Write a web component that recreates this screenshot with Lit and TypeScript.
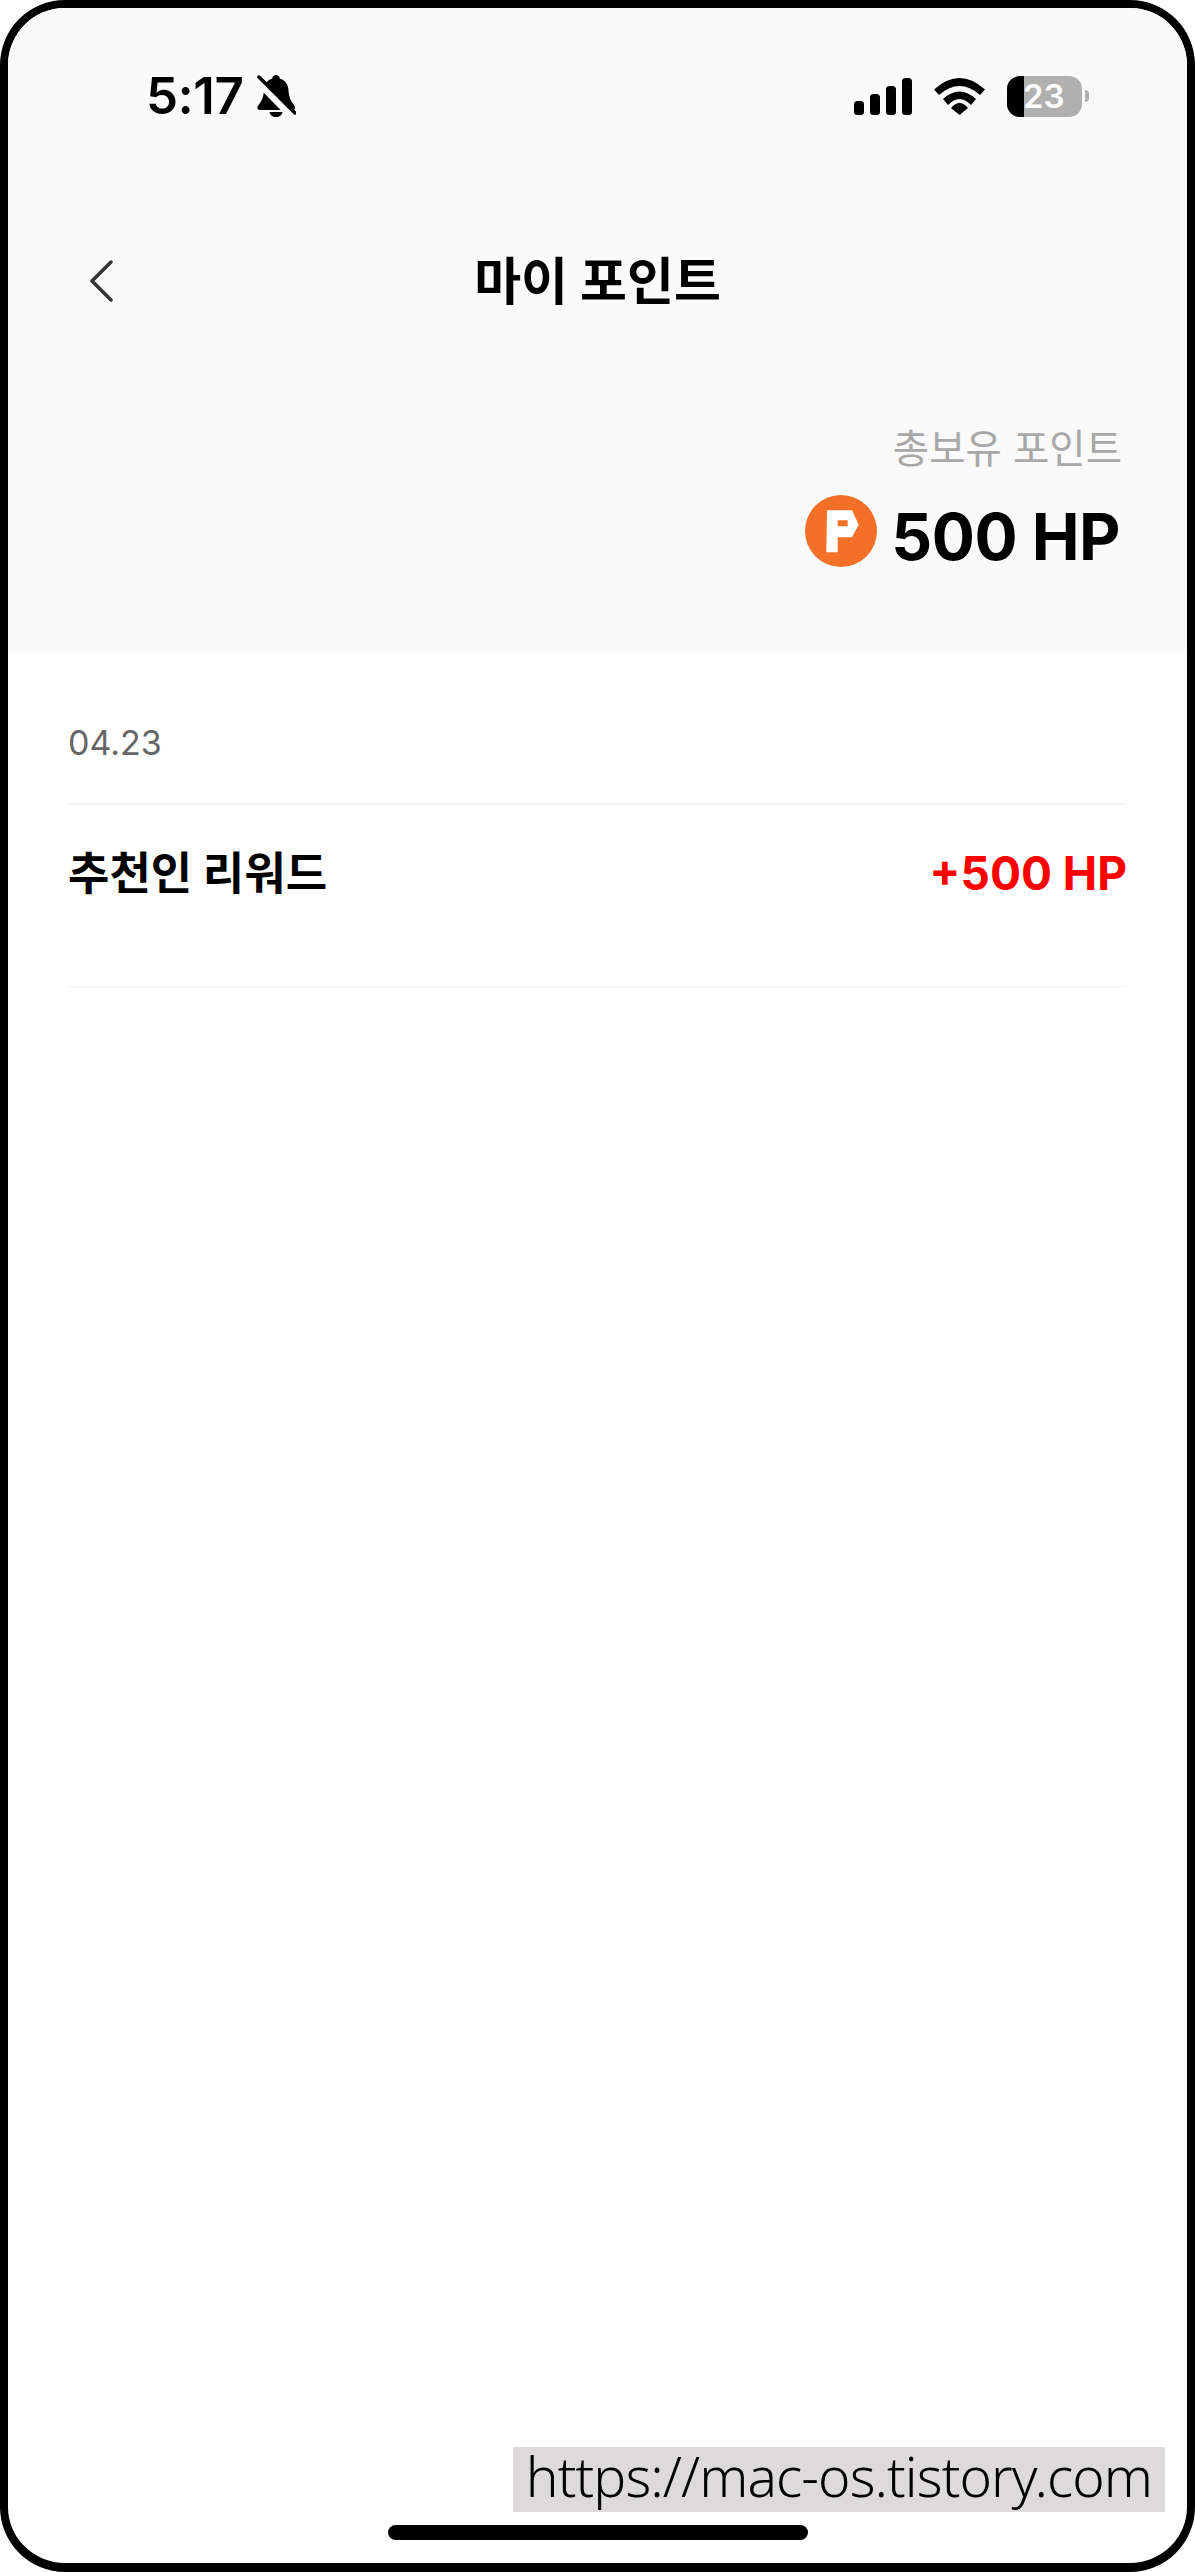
import { LitElement, html, css } from "lit";
import { customElement } from "lit/decorators.js";

@customElement("app-root")
export class AppRoot extends LitElement {
  static styles = css`
    :host { display: block; width: 1195px; height: 2572px; background: #fff; font-family: Inter, "Noto Sans CJK KR", sans-serif; color: #000; }
    .frame { position: relative; box-sizing: border-box; width: 1195px; height: 2572px; border: 8px solid #000; border-bottom-width: 9px; border-radius: 65px; overflow: hidden; display: flex; flex-direction: column; background: #fff; }
    .top { height: 645px; background: #fafafa; flex: none; }
    .status { height: 176px; display: flex; align-items: center; padding: 0 98px 0 138px; }
    .time { font-size: 51px; font-weight: 600; line-height: 60px; letter-spacing: -0.5px; }
    .bell { width: 39px; height: 42px; margin-left: 14px; }
    .right { margin-left: auto; display: flex; align-items: center; }
    .signal { width: 58px; height: 37px; }
    .wifi { width: 51px; height: 37px; margin-left: 22px; }
    .battery { position: relative; width: 75px; height: 41px; margin-left: 22px; border-radius: 13px; overflow: hidden; background: #b0b0b0; display: flex; align-items: center; justify-content: flex-end; }
    .level { position: absolute; left: 0; top: 0; bottom: 0; width: 17px; background: #000; }
    .pct { position: relative; width: 59px; box-sizing: border-box; font-size: 33px; font-weight: 600; line-height: 41px; color: #fff; }
    .tip { width: 4px; height: 12px; margin-left: 3px; background: #b0b0b0; border-radius: 0 6px 6px 0; }
    .nav { position: relative; height: 194px; display: flex; align-items: center; justify-content: center; }
    .back { position: absolute; left: 81px; top: 76px; width: 24px; height: 42px; }
    .title { font-size: 51px; font-weight: 700; line-height: 60px; padding-top: 2px; }
    .summary { display: flex; flex-direction: column; align-items: flex-end; padding: 51px 65px 0 0; }
    .label { font-size: 39.5px; line-height: 40px; color: #a8a8a8; font-weight: 400; }
    .balance { display: flex; align-items: center; margin: 26px 2px 0 0; height: 72px; }
    .coin { width: 72px; height: 72px; }
    .amount { margin-left: 14px; padding-top: 11px; font-size: 64px; font-weight: 700; line-height: 72px; letter-spacing: -0.5px; }
    .list { padding: 70px 60px 0; }
    .date { height: 40px; font-size: 34px; line-height: 40px; color: #666; padding-bottom: 40px; border-bottom: 2px solid #f3f3f3; }
    .row { box-sizing: border-box; height: 183px; padding-top: 43px; display: flex; justify-content: space-between; border-bottom: 2px solid #f8f8f8; line-height: 50px; }
    .name { font-size: 45px; font-weight: 700; padding-top: 1px; }
    .delta { font-size: 46px; font-weight: 700; color: #f00; }
    .spacer { flex: 1; }
    .home { flex: none; width: 420px; height: 15px; margin: 0 0 23px 380px; border-radius: 8px; background: #000; }
    .mark { position: absolute; right: 22px; bottom: 51px; box-sizing: border-box; width: 652px; height: 65px; padding-bottom: 8px; background: #dcdadb; display: flex; align-items: center; justify-content: center; font-family: "Noto Sans", sans-serif; font-size: 55px; font-weight: 350; letter-spacing: -0.9px; line-height: 57px; white-space: nowrap; }
  `;

  render() {
    return html`
      <div class="frame">
        <div class="top">
          <div class="status">
            <span class="time">5:17</span>
            <svg class="bell" viewBox="0 0 39 42">
              <path d="M19 0c2 0 3.500 1.500 3.800 3.500C28 5 31 9.500 31.500 15c.4 6 1.500 10 5.500 15 2 2.500 1.500 5-1.500 5H3c-3 0-3.500-2.500-1.500-5 4-5 5-9 5.500-15C7.500 9.500 10 5 15.200 3.500 15.500 1.500 17 0 19 0z" fill="#000"/>
              <path d="M12.500 37h13c-.5 3-3 5-6.500 5s-6-2-6.500-5z" fill="#000"/>
              <path d="M-2 3L36 42" stroke="#fafafa" stroke-width="8" fill="none"/>
              <path d="M2 2L38 38" stroke="#000" stroke-width="3.500" stroke-linecap="round" fill="none"/>
            </svg>
            <div class="right">
              <svg class="signal" viewBox="0 0 58 37">
                <rect x="0" y="23" width="10" height="14" rx="3.500"/>
                <rect x="16" y="16" width="10" height="21" rx="3.500"/>
                <rect x="32" y="8" width="10" height="29" rx="3.500"/>
                <rect x="48" y="0" width="10" height="37" rx="3.500"/>
              </svg>
              <svg class="wifi" viewBox="0 0 51 37">
                <path d="M0 11.500Q25.500-11.500 51 11.500L46 17Q25.500-1 5 17Z"/>
                <path d="M9 21Q25.500 6 42 21L37 27Q25.500 15 14 27Z"/>
                <path d="M17 30Q25.500 20 34 30L25.500 37Z"/>
              </svg>
              <div class="battery"><span class="level"></span><span class="pct">23</span></div>
              <span class="tip"></span>
            </div>
          </div>
          <div class="nav">
            <svg class="back" viewBox="0 0 24 42"><path d="M22 2L3 21L22 40" fill="none" stroke="#333" stroke-width="3.500" stroke-linecap="round" stroke-linejoin="round"/></svg>
            <span class="title">마이 포인트</span>
          </div>
          <div class="summary">
            <span class="label">총보유 포인트</span>
            <div class="balance">
              <svg class="coin" viewBox="0 0 72 72">
                <circle cx="36" cy="36" r="36" fill="#f47026"/>
                <path fill-rule="evenodd" fill="#fff" d="M22 15.300H47L53.700 29.700L47 42.300H32.700V57.300H21.300ZM32.700 25.300V31.300H42.700V25.300Z"/>
              </svg>
              <span class="amount">500 HP</span>
            </div>
          </div>
        </div>
        <div class="list">
          <div class="date">04.23</div>
          <div class="row">
            <span class="name">추천인 리워드</span>
            <span class="delta">+500 HP</span>
          </div>
        </div>
        <div class="spacer"></div>
        <div class="home"></div>
        <div class="mark">https://mac-os.tistory.com</div>
      </div>
    `;
  }
}
